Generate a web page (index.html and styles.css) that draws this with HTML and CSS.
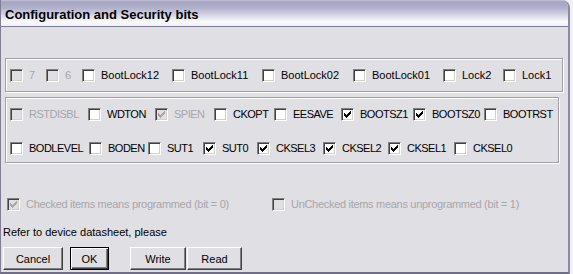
FILE: index.html
```html
<!DOCTYPE html>
<html lang="en">

<head>
  <meta charset="utf-8">
  <title>Configuration and Security bits</title>
  <link rel="stylesheet" href="styles.css">
</head>

<body>
  <div class="window">
    <!-- title -->
    <div class="titlebar">Configuration and Security bits</div>

    <div class="content">
      <!-- lock bits -->
      <div class="group group-lock">
        <label class="bit w36 off"><span class="cb"></span>7</label>
        <label class="bit w36 off"><span class="cb"></span>6</label>
        <label class="bit w90"><span class="cb"></span>BootLock12</label>
        <label class="bit w90"><span class="cb"></span>BootLock11</label>
        <label class="bit w91"><span class="cb"></span>BootLock02</label>
        <label class="bit w90"><span class="cb"></span>BootLock01</label>
        <label class="bit w60"><span class="cb"></span>Lock2</label>
        <label class="bit"><span class="cb"></span>Lock1</label>
      </div>

      <!-- fuse bits -->
      <div class="group group-fuse">
        <div class="row">
          <label class="bit w78 off"><span class="cb"></span>RSTDISBL</label>
          <label class="bit w67"><span class="cb"></span>WDTON</label>
          <label class="bit w59 off"><span class="cb"><svg viewBox="0 0 11 11"><path d="M2 4h1v3H2zM3 5h1v3H3zM4 6h1v3H4zM5 5h1v3H5zM6 4h1v3H6zM7 3h1v3H7zM8 2h1v3H8z"/></svg></span>SPIEN</label>
          <label class="bit w60"><span class="cb"></span>CKOPT</label>
          <label class="bit w67"><span class="cb"></span>EESAVE</label>
          <label class="bit w72"><span class="cb"><svg viewBox="0 0 11 11"><path d="M2 4h1v3H2zM3 5h1v3H3zM4 6h1v3H4zM5 5h1v3H5zM6 4h1v3H6zM7 3h1v3H7zM8 2h1v3H8z"/></svg></span>BOOTSZ1</label>
          <label class="bit w71"><span class="cb"><svg viewBox="0 0 11 11"><path d="M2 4h1v3H2zM3 5h1v3H3zM4 6h1v3H4zM5 5h1v3H5zM6 4h1v3H6zM7 3h1v3H7zM8 2h1v3H8z"/></svg></span>BOOTSZ0</label>
          <label class="bit"><span class="cb"></span>BOOTRST</label>
        </div>
        <div class="row">
          <label class="bit w79"><span class="cb"></span>BODLEVEL</label>
          <label class="bit w59"><span class="cb"></span>BODEN</label>
          <label class="bit w55"><span class="cb"></span>SUT1</label>
          <label class="bit w54"><span class="cb"><svg viewBox="0 0 11 11"><path d="M2 4h1v3H2zM3 5h1v3H3zM4 6h1v3H4zM5 5h1v3H5zM6 4h1v3H6zM7 3h1v3H7zM8 2h1v3H8z"/></svg></span>SUT0</label>
          <label class="bit w66"><span class="cb"><svg viewBox="0 0 11 11"><path d="M2 4h1v3H2zM3 5h1v3H3zM4 6h1v3H4zM5 5h1v3H5zM6 4h1v3H6zM7 3h1v3H7zM8 2h1v3H8z"/></svg></span>CKSEL3</label>
          <label class="bit w65"><span class="cb"><svg viewBox="0 0 11 11"><path d="M2 4h1v3H2zM3 5h1v3H3zM4 6h1v3H4zM5 5h1v3H5zM6 4h1v3H6zM7 3h1v3H7zM8 2h1v3H8z"/></svg></span>CKSEL2</label>
          <label class="bit w66"><span class="cb"><svg viewBox="0 0 11 11"><path d="M2 4h1v3H2zM3 5h1v3H3zM4 6h1v3H4zM5 5h1v3H5zM6 4h1v3H6zM7 3h1v3H7zM8 2h1v3H8z"/></svg></span>CKSEL1</label>
          <label class="bit"><span class="cb"></span>CKSEL0</label>
        </div>
      </div>

      <!-- legend -->
      <div class="legend">
        <label class="bit w265 off"><span class="cb"><svg viewBox="0 0 11 11"><path d="M2 4h1v3H2zM3 5h1v3H3zM4 6h1v3H4zM5 5h1v3H5zM6 4h1v3H6zM7 3h1v3H7zM8 2h1v3H8z"/></svg></span>Checked items means programmed (bit = 0)</label>
        <label class="bit off"><span class="cb"></span>UnChecked items means unprogrammed (bit = 1)</label>
      </div>

      <p class="note">Refer to device datasheet, please</p>

      <div class="buttons">
        <button class="btn btn-cancel">Cancel</button>
        <button class="btn btn-ok">OK</button>
        <button class="btn btn-write">Write</button>
        <button class="btn btn-read">Read</button>
      </div>
    </div>
  </div>
</body>

</html>
```

FILE: styles.css
```css
* {
  padding: 0;
  margin: 0;
  box-sizing: border-box;
}

body {
  background-color: #f1f1f4;
  font-family: "Liberation Sans", Arial, sans-serif;
  font-size: 11px;
  color: #000;
}

/* 窗口 */
.window {
  width: 570px;
  height: 274px;
  background-color: #e0dfe3;
  border-left: 1px solid #7f7e96;
  border-right: 2px solid #8c8ba3;
  border-bottom: 2px solid #6f6e86;
  border-top-right-radius: 8px;
  overflow: hidden;
}

.titlebar {
  height: 27px;
  padding: 4px 0 0 4px;
  line-height: 22px;
  font-size: 13px;
  font-weight: 700;
  background: linear-gradient(to bottom, #c3c2d8 0, #a5a4c2 2px, #b1b0cb 8px, #d6d5e4 15px, #fbfbfd 22px, #eeeef4 26px);
  border-bottom: 1px solid #7d7c99;
}

.content {
  padding-left: 2px;
}

/* 分组框 */
.group {
  margin-left: 2px;
  border: 1px solid #a09fa8;
  box-shadow: inset 1px 1px 0 #fff, 1px 1px 0 #fff;
}

.group-lock {
  margin-top: 31px;
  width: 558px;
  height: 34px;
  padding: 10px 0 0 4px;
  display: flex;
}

.group-fuse {
  margin-top: 5px;
  width: 554px;
  height: 66px;
  padding: 10px 0 0 4px;
  display: flex;
  flex-direction: column;
  gap: 21px;
  letter-spacing: -0.5px;
}

.row {
  display: flex;
}

/* 复选框 */
.bit {
  display: flex;
  align-items: center;
  gap: 6px;
  height: 13px;
  line-height: 13px;
  white-space: nowrap;
  flex: none;
}

.cb {
  width: 13px;
  height: 13px;
  flex: none;
  border: 1px solid;
  border-color: #808080 #fff #fff #808080;
  box-shadow: inset 1px 1px 0 #404040, inset -1px -1px 0 #d4d0c8;
  background-color: #fff;
}

.cb svg {
  display: block;
  width: 11px;
  height: 11px;
  fill: #000;
  shape-rendering: crispEdges;
}

.off {
  color: #a7a6aa;
}

.off .cb {
  background-color: #e0dfe3;
}

.off .cb svg {
  fill: #a7a6aa;
}

.w36 { width: 36px; }
.w54 { width: 54px; }
.w55 { width: 55px; }
.w59 { width: 59px; }
.w60 { width: 60px; }
.w65 { width: 65px; }
.w66 { width: 66px; }
.w67 { width: 67px; }
.w71 { width: 71px; }
.w72 { width: 72px; }
.w78 { width: 78px; }
.w79 { width: 79px; }
.w90 { width: 90px; }
.w91 { width: 91px; }
.w265 { width: 265px; }

/* 说明 */
.legend {
  display: flex;
  margin: 35px 0 0 4px;
  letter-spacing: -0.3px;
}

.note {
  margin-top: 15px;
  line-height: 13px;
}

/* 按钮 */
.buttons {
  display: flex;
  margin-top: 8px;
}

.btn {
  height: 23px;
  font-family: inherit;
  font-size: 11px;
  color: #000;
  background-color: #e0dfe3;
  border: 1px solid;
  border-color: #fff #404040 #404040 #fff;
  box-shadow: inset -1px -1px 0 #808080;
}

.btn-cancel {
  width: 60px;
}

.btn-ok {
  width: 39px;
  margin-left: 7px;
  border-color: #000;
  box-shadow: inset 1px 1px 0 #fff, inset -1px -1px 0 #404040, inset -2px -2px 0 #808080;
}

.btn-write {
  width: 56px;
  margin-left: 21px;
}

.btn-read {
  width: 55px;
  margin-left: 1px;
}
```
